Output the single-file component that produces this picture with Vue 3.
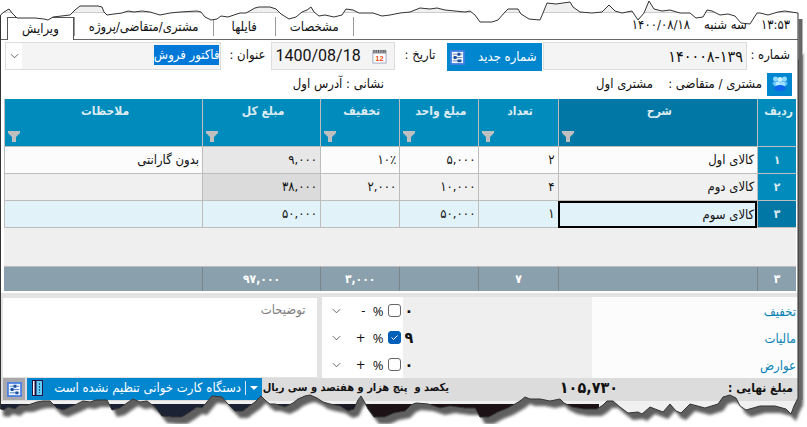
<template>
  <div class="window" dir="rtl">
    <header class="topbar">
      <div class="clock">
        <span>۱۳:۵۳</span>
        <span>سه شنبه</span>
        <span>۱۴۰۰/۰۸/۱۸</span>
      </div>
      <nav class="tabs">
        <button
          v-for="tab in tabs"
          :key="tab"
          type="button"
          class="tab"
          :class="{ active: tab === activeTab }"
          @click="activeTab = tab"
        >{{ tab }}</button>
      </nav>
    </header>

    <form class="invoice" @submit.prevent>
      <div class="fields">
        <label class="label label-number" for="number">شماره :</label>
        <input id="number" v-model="number" class="box number" type="text">
        <button type="button" class="new-number">
          <span>شماره جدید</span>
          <svg class="icon" viewBox="0 0 16 16">
            <rect x="1" y="1" width="14" height="14" fill="#eef5ff" stroke="#3d7fe0" stroke-width="2" />
            <path d="M3 4.5h10M3 8h10M3 11.5h10" stroke="#6b87ab" />
            <path d="M8 3h3v3H8zM4 6.5h3v3H4zM8 10h4v3H8z" fill="#1c4f9c" />
          </svg>
        </button>
        <label class="label label-date" for="date">تاریخ :</label>
        <div class="box date">
          <svg class="icon" viewBox="0 0 16 16">
            <rect x="1" y="2" width="14" height="13" fill="#fff" stroke="#9aa7c4" />
            <path d="M1 1h14v4H1z" fill="#a3a6ad" />
            <path d="M2 1v3M4.500 1v3M7 1v3M9.500 1v3M12 1v3M14 1v3" stroke="#555" />
            <text x="8" y="13" text-anchor="middle" class="day">12</text>
          </svg>
          <input id="date" v-model="date" type="text" dir="ltr">
        </div>
        <label class="label label-title" for="title">عنوان :</label>
        <div class="box combo">
          <input id="title" ref="titleInput" v-model="title" type="text">
          <button type="button" aria-label="انتخاب عنوان">
            <svg class="chevron" viewBox="0 0 10 6"><path d="M1 1l4 4 4-4" /></svg>
          </button>
        </div>
      </div>

      <div class="customer">
        <button type="button" class="people" aria-label="مشتری">
          <svg viewBox="0 0 16 16">
            <circle cx="3.500" cy="3" r="2.500" fill="#8fd8ff" />
            <circle cx="12.500" cy="3" r="2.500" fill="#8fd8ff" />
            <circle cx="8" cy="3.500" r="2.500" fill="#c2f0ff" />
            <path d="M0.500 8c0-4 5-3 7.500-1 2.500-2 7.500-3 7.500 1l-3 3h-9z" fill="#62c4fb" />
            <circle cx="6" cy="8" r="2.500" fill="#b4ebff" />
            <circle cx="10.500" cy="8" r="2.500" fill="#9fe0ff" />
            <path d="M2.500 12c0-4 11-4 11 0 0 4-11 4-11 0z" fill="#0f66ee" />
          </svg>
        </button>
        <span class="party">مشتری / متقاضی :</span>
        <span class="party-name">مشتری اول</span>
        <span>نشانی : آدرس اول</span>
      </div>

      <table class="items">
        <colgroup>
          <col class="c-index">
          <col class="c-title">
          <col class="c-small">
          <col class="c-small">
          <col class="c-small">
          <col class="c-total">
          <col>
        </colgroup>
        <thead>
          <tr>
            <th v-for="(col, i) in columns" :key="col" :class="{ current: i === 1 }">
              <div class="head">
                <span>{{ col }}</span>
                <svg v-if="i > 0" class="funnel" viewBox="0 0 12 11">
                  <path d="M0 0h12v2L8 6v5H4V6L0 2z" />
                </svg>
              </div>
            </th>
          </tr>
        </thead>
        <tbody>
          <tr v-for="(row, i) in rows" :key="i" :class="{ selected: i === 2 }">
            <th scope="row">{{ row.index }}</th>
            <td :class="{ focused: i === 2 }">{{ row.name }}</td>
            <td>{{ row.count }}</td>
            <td>{{ row.price }}</td>
            <td>{{ row.discount }}</td>
            <td class="sum">{{ row.total }}</td>
            <td>{{ row.note }}</td>
          </tr>
          <tr class="blank"><td colspan="7"></td></tr>
        </tbody>
        <tfoot>
          <tr>
            <td v-for="(value, i) in totals" :key="i">{{ value }}</td>
          </tr>
        </tfoot>
      </table>

      <section class="bottom">
        <div class="charge-names">
          <label v-for="(c, i) in charges" :key="i" :for="'charge' + i">{{ c.name }}</label>
        </div>
        <div class="charge-values">
          <input v-for="(c, i) in charges" :id="'charge' + i" :key="i" v-model="c.value" type="text">
        </div>
        <div class="charge-modes">
          <div v-for="(c, i) in charges" :key="i" class="mode">
            <label class="percent">
              <input v-model="c.percent" type="checkbox">
              <svg class="tick" viewBox="0 0 13 13"><path d="M3.500 6.500l2 2 4-4" /></svg>
              <span>%</span>
            </label>
            <div class="sign">
              <select v-model="c.sign" :aria-label="c.name">
                <option>+</option>
                <option>-</option>
              </select>
              <svg class="chevron" viewBox="0 0 10 6"><path d="M1 1l4 4 4-4" /></svg>
            </div>
          </div>
        </div>
        <textarea v-model="notes" class="notes" placeholder="توضیحات" aria-label="توضیحات"></textarea>
      </section>

      <footer class="final">
        <span class="final-label">مبلغ نهایی :</span>
        <strong class="amount">۱۰۵,۷۳۰</strong>
        <span class="words">یکصد و&nbsp; پنج هزار و هفتصد و سی ریال</span>
        <button type="button" class="reader">
          <svg class="caret" viewBox="0 0 8 4"><path d="M0 0h8L4 4z" /></svg>
          <span class="bar"></span>
          <span>دستگاه کارت خوانی تنظیم نشده است</span>
          <svg class="card" viewBox="0 0 11 16">
            <rect x="0.500" y="0.500" width="10" height="15" fill="#63cdf5" stroke="#231245" />
            <path d="M1 1h3v14H1z" fill="#fff" />
            <path d="M3.500 0v16" stroke="#231245" stroke-width="2" />
            <path d="M7.500 3v10" stroke="#1d5f94" stroke-dasharray="2 1" />
          </svg>
        </button>
        <button type="button" class="settings" aria-label="تنظیمات">
          <svg class="icon" viewBox="0 0 16 16">
            <rect x="1" y="1" width="14" height="14" fill="#eef5ff" stroke="#4f83e0" stroke-width="2" />
            <path d="M3 4.500h10M3 8h10M3 11.500h10" stroke="#4a7fc8" />
            <path d="M7 3h3v3H7zM4 6.500h3v3H4zM9 10h3v3H9z" fill="#1c4f9c" />
          </svg>
        </button>
      </footer>
    </form>
    <div class="desktop"></div>

    <!-- torn paper edges -->
    <svg class="torn" viewBox="0 0 807 427" preserveAspectRatio="none" aria-hidden="true">
      <defs>
        <clipPath id="outside">
          <path :d="`M0 427V409L${bottomEdge}V60L807 50V427Z`" />
        </clipPath>
        <filter id="soft" x="-5%" y="-5%" width="110%" height="110%">
          <feGaussianBlur stdDeviation="1.500" />
        </filter>
      </defs>
      <path :d="`M0 0V15L${topEdge}H807V0Z`" fill="#fff" />
      <path :d="`M0 427V409L${bottomEdge}V13H807V427Z`" fill="#fff" />
      <g clip-path="url(#outside)">
        <path :d="`M-2 13V409L${bottomEdge}V13Z`" transform="translate(5 7)" fill="#5f5f5f" filter="url(#soft)" />
      </g>
      <path d="M800.500 19V400" stroke="#666" stroke-width="4" />
      <path :d="`M0.500 15L${topEdge}`" class="edge" />
      <path :d="`M0.500 15V409L${bottomEdge}V13`" class="edge" />
    </svg>
  </div>
</template>

<script setup>
import { ref, onMounted } from 'vue';

const tabs = ['مشخصات', 'فایلها', 'مشتری/متقاضی/پروژه', 'ویرایش'];
const activeTab = ref('ویرایش');

const number = ref('۱۴۰۰۰۸-۱۳۹');
const date = ref('1400/08/18');
const title = ref('فاکتور فروش');
const notes = ref('');
const titleInput = ref(null);

const columns = ['ردیف', 'شرح', 'تعداد', 'مبلغ واحد', 'تخفیف', 'مبلغ کل', 'ملاحظات'];

const rows = [
  { index: '۱', name: 'کالای اول', count: '۲', price: '۵,۰۰۰', discount: '۱۰٪', total: '۹,۰۰۰', note: 'بدون گارانتی' },
  { index: '۲', name: 'کالای دوم', count: '۴', price: '۱۰,۰۰۰', discount: '۲,۰۰۰', total: '۳۸,۰۰۰', note: '' },
  { index: '۳', name: 'کالای سوم', count: '۱', price: '۵۰,۰۰۰', discount: '', total: '۵۰,۰۰۰', note: '' }
];

const totals = ['۳', '', '۷', '', '۳,۰۰۰', '۹۷,۰۰۰', ''];

const charges = ref([
  { name: 'تخفیف', value: '۰', percent: false, sign: '-' },
  { name: 'مالیات', value: '۹', percent: true, sign: '+' },
  { name: 'عوارض', value: '۰', percent: false, sign: '+' }
]);

// Torn edge outlines, left to right
const topEdge = '4 12 9 9 12 13 17 18 25 18 35 18 44 19 48 20 53 17 70 15 75 10 80 6 98 6 102 7 104 12 107 15 114 14 122 13 128 11 134 12 142 11 150 12 160 15 170 13 180 12 197 11 201 12 205 17 211 20 217 19 221 16 228 17 240 13 246 13 255 8 259 7 270 7 276 9 281 14 289 19 296 17 302 12 307 10 311 7 314 12 319 16 325 15 334 17 342 15 346 9 353 10 359 13 373 13 382 16 390 15 400 13 410 12 420 8 430 9 437 8 445 10 455 11 465 12 470 11 475 15 480 22 492 22 498 20 505 12 508 9 518 9 521 14 529 19 540 20 543 13 547 3 556 4 570 2 573 7 580 12 592 13 602 12 609 5 615 11 622 13 632 11 638 20 644 13 649 1 654 9 662 11 670 10 680 13 690 13 696 18 703 17 707 10 712 11 720 15 728 14 735 16 741 23 750 24 757 13 760 13 768 15 778 12 785 11 791 12 798 13';
const bottomEdge = '4 410 8 407 15 409 20 405 28 405 37 402 43 401 50 401 57 408 63 410 70 407 77 404 83 401 90 402 96 400 107 400 112 410 120 408 127 403 133 399 140 402 147 401 155 407 162 416 172 417 182 417 190 412 197 407 202 408 207 402 212 396 222 397 227 403 235 411 243 411 248 407 255 402 261 396 266 401 270 404 275 404 285 407 293 403 298 399 305 396 310 395 317 398 323 402 330 404 340 406 348 411 354 409 358 400 361 396 365 403 368 409 374 417 385 417 394 413 405 411 411 405 416 403 428 404 440 408 450 406 465 408 475 408 480 417 489 417 498 412 508 408 515 404 520 401 525 397 530 399 540 399 550 401 560 399 564 403 572 407 583 409 597 409 603 405 607 401 613 401 620 407 628 413 638 412 642 414 650 407 655 409 663 412 670 404 676 411 681 413 690 404 705 408 718 404 723 397 730 395 736 398 740 406 746 410 760 406 775 406 786 409 791 414 794 406 798 398';

onMounted(() => {
  titleInput.value.focus();
  titleInput.value.select();
});
</script>

<style>
body {
  margin: 0;
  overflow: hidden;
  background: #fff;
}
</style>

<style scoped>
* {
  box-sizing: border-box;
}

.window {
  position: relative;
  padding: 0 9px 3px 1px;
  font-family: 'DejaVu Sans Condensed', 'DejaVu Sans', sans-serif;
  font-size: 13px;
  line-height: 20px;
  color: #111;
}

button,
input,
select,
textarea {
  margin: 0;
  padding: 0;
  border: 0;
  border-radius: 0;
  background: none;
  font: inherit;
  color: inherit;
  outline: none;
}

svg {
  display: block;
  flex: none;
}

.icon {
  width: 15px;
  height: 15px;
}

.chevron {
  width: 9px;
  height: 6px;
  fill: none;
  stroke: #555;
}

/* Top bar */
.topbar {
  display: flex;
  justify-content: space-between;
  align-items: flex-end;
  height: 40px;
  border-bottom: 1px solid #666;
  background: linear-gradient(#f0f0f0 12px, #ccc 12px, #ccc 13px, #fff 13px);
}

.clock {
  display: flex;
  gap: 14px;
  padding: 0 8px 4px 0;
}

.tabs {
  display: flex;
  padding-left: 6px;
}

.tab {
  height: 19px;
  margin-bottom: 1px;
  padding: 0 14px;
  border-left: 1px solid #999;
  line-height: 18px;
}

.tab:first-child {
  border-right: 1px solid #999;
}

.tab:nth-child(2) {
  padding: 0 18px;
}

.tab.active {
  height: 23px;
  margin-bottom: -1px;
  border: 1px solid #555;
  border-bottom: 0;
  background: #fff;
}

/* Form fields */
.fields {
  display: flex;
  align-items: flex-start;
  height: 32px;
  padding: 2px 8px 0 4px;
}

.label {
  flex: none;
  line-height: 26px;
}

.label-number {
  width: 43px;
}

.label-date {
  width: 52px;
  padding-right: 12px;
}

.label-title {
  width: 50px;
  padding-right: 6px;
}

.box {
  height: 28px;
  border: 1px solid #ddd;
  background: #f4f4f4;
}

.number {
  flex: 196 1 0;
  min-width: 0;
  padding: 0 3px;
  font-size: 16px;
}

.new-number {
  display: flex;
  flex: none;
  align-items: center;
  justify-content: space-between;
  width: 95px;
  height: 28px;
  margin-top: 1px;
  margin-right: 1px;
  padding: 0 6px 0 3px;
  background: #0085cf;
  color: #fff;
}

.date {
  display: flex;
  flex: none;
  align-items: center;
  justify-content: space-between;
  width: 124px;
  padding: 0 7px 0 3px;
}

.date input {
  width: 92px;
  font-family: Roboto, sans-serif;
  font-size: 16px;
}

.day {
  font: bold 8px 'Liberation Sans', sans-serif;
  fill: #f04a10;
}

.combo {
  display: flex;
  flex: 215 1 0;
  min-width: 0;
}

.combo input {
  flex: 1;
  min-width: 0;
  height: 20px;
  margin-top: 2px;
  padding-right: 1px;
}

.combo input::selection {
  background: #0078d7;
  color: #fff;
}

.combo button {
  display: flex;
  align-items: center;
  justify-content: center;
  width: 16px;
  background: #fff;
}

.customer {
  display: flex;
  align-items: center;
  height: 27px;
  padding: 0 6px 3px 0;
}

.people {
  display: grid;
  place-items: center;
  width: 25px;
  height: 23px;
  background: #0085cf;
}

.people svg {
  width: 16px;
  height: 16px;
}

.party {
  width: 114px;
  padding-right: 5px;
}

.party-name {
  width: 269px;
}

/* Items table */
.items {
  width: calc(100% - 5px);
  margin: 0 2px 0 3px;
  border-collapse: separate;
  border-spacing: 0;
  table-layout: fixed;
}

.c-index {
  width: 4.900%;
}

.c-title {
  width: 25.200%;
}

.c-small {
  width: 10%;
}

.c-total {
  width: 14.900%;
}

.items th,
.items td {
  overflow: hidden;
  padding: 0 3px;
  border-left: 1px solid #bdbdbd;
  border-bottom: 1px solid #bdbdbd;
  text-align: right;
  white-space: nowrap;
}

.items th {
  padding: 0;
  background: #008bbd;
  color: #dcebf0;
  font-size: 12px;
  text-align: center;
}

.items thead th {
  height: 48px;
}

.items th.current,
.items .selected th {
  background: #0077a5;
}

.head {
  display: flex;
  flex-direction: column;
  justify-content: space-between;
  height: 47px;
  padding: 2px 0 4px 3px;
}

.funnel {
  width: 12px;
  height: 11px;
  margin-right: auto;
  fill: #bfbfbf;
}

.items tbody td,
.items tbody th {
  height: 27px;
  background: #fcfcfc;
}

.items tbody th {
  background: #008bbd;
}

.items tbody tr:nth-child(2) td {
  background: #f0f0f0;
}

.items tbody td.sum {
  background: #e7e7e7;
}

.items tbody tr:nth-child(2) td.sum {
  background: #dbdbdb;
}

.items tbody .selected th {
  background: #0077a5;
}

.items tbody .selected td,
.items tbody .selected td.sum {
  background: #e1f2f9;
}

.items tbody td.focused {
  padding: 0 1px;
  border: 2px solid #000;
}

.items tbody .blank td {
  height: 39px;
  border-left: 0;
  background: #efefef;
}

.items tfoot td {
  height: 24px;
  border-left-color: #7b868b;
  border-bottom: 0;
  background: #8aa0ac;
  color: #fff;
  font-size: 12px;
  font-weight: bold;
  text-align: center;
}

.items tfoot td:last-child {
  border-left: 0;
}

/* Charges and notes */
.bottom {
  display: flex;
  height: 85px;
  margin-top: 2px;
  padding-left: 2px;
  border-top: 4px solid #e3e3e3;
  background: #e3e3e3;
}

.charge-names,
.charge-values,
.charge-modes {
  display: grid;
  grid-template-rows: repeat(3, 27px);
  background: #fcfcfc;
}

.charge-names {
  flex: 204 1 0;
  padding-right: 2px;
  color: #0b84b5;
  line-height: 29px;
}

.charge-values {
  flex: 190 1 0;
  background: #efefef;
}

.charge-values input {
  min-width: 0;
  width: 100%;
  height: 27px;
  padding-left: 2px;
  font-size: 16px;
  font-weight: bold;
  text-align: left;
}

/* values hug the percent boxes on the left */
.charge-values input {
  direction: ltr;
  text-align: left;
}

.charge-modes {
  flex: none;
  width: 81px;
  background: #fff;
}

.mode {
  display: flex;
  align-items: center;
}

.percent {
  display: grid;
  grid-template-columns: 13px 12px;
  gap: 4px;
  align-items: center;
  margin-right: 2px;
  font-family: 'Open Sans', sans-serif;
}

.percent input {
  grid-area: 1 / 1;
  appearance: none;
  width: 13px;
  height: 13px;
  border: 1px solid #666;
  border-radius: 3px;
  background: #fff;
}

.percent input:checked {
  border-color: #005fb8;
  background: #005fb8;
}

.tick {
  grid-area: 1 / 1;
  width: 13px;
  height: 13px;
  fill: none;
  stroke: #fff;
  pointer-events: none;
}

.sign {
  display: grid;
  grid-template-columns: 40px;
  align-items: center;
}

.sign select {
  grid-area: 1 / 1;
  appearance: none;
  width: 40px;
  height: 20px;
  padding-right: 6px;
  line-height: 20px;
}

.sign .chevron {
  grid-area: 1 / 1;
  justify-self: end;
  pointer-events: none;
}

.notes {
  flex: 292 1 0;
  min-width: 0;
  height: 79px;
  margin-top: 1px;
  margin-right: 5px;
  padding: 2px 11px;
  background: #fff;
  resize: none;
}

.notes::placeholder {
  color: #808080;
  opacity: 1;
}

/* Final amount */
.final {
  display: flex;
  height: 23px;
  padding: 0 5px 0 2px;
  background: #dcdcdc;
}

.final-label {
  flex: 175 1 0;
  min-width: 0;
  font-size: 12px;
  font-weight: bold;
}

.amount {
  flex: 169 1 0;
  min-width: 0;
  font-size: 16px;
}

.words {
  flex: 187 1 0;
  min-width: 0;
  font-size: 11px;
  font-weight: bold;
  white-space: nowrap;
}

.reader {
  display: flex;
  flex: none;
  align-items: center;
  gap: 4px;
  width: 235px;
  height: 22px;
  padding: 0 4px 2px 5px;
  background: #0085cf;
  color: #fff;
  white-space: nowrap;
}

.caret {
  width: 8px;
  height: 4px;
  fill: #fff;
}

.bar {
  flex: none;
  width: 1px;
  height: 14px;
  background: #cfe6f5;
}

.card {
  width: 11px;
  height: 16px;
  margin-right: auto;
}

.settings {
  display: grid;
  flex: none;
  place-items: center;
  width: 22px;
  height: 22px;
  margin-right: 2px;
  background: #a9a9ad;
}

/* Strip of desktop under the window */
.desktop {
  height: 20px;
  border-top: 3px solid #f0f0f0;
  background: linear-gradient(to right, #1b2233 40%, #1c1216 47%, #1c1216 75%, #f0f0f0 75%);
}

.torn {
  position: absolute;
  top: 0;
  left: 0;
  width: 100%;
  height: 427px;
  pointer-events: none;
}

.edge {
  fill: none;
  stroke: #333;
}
</style>
